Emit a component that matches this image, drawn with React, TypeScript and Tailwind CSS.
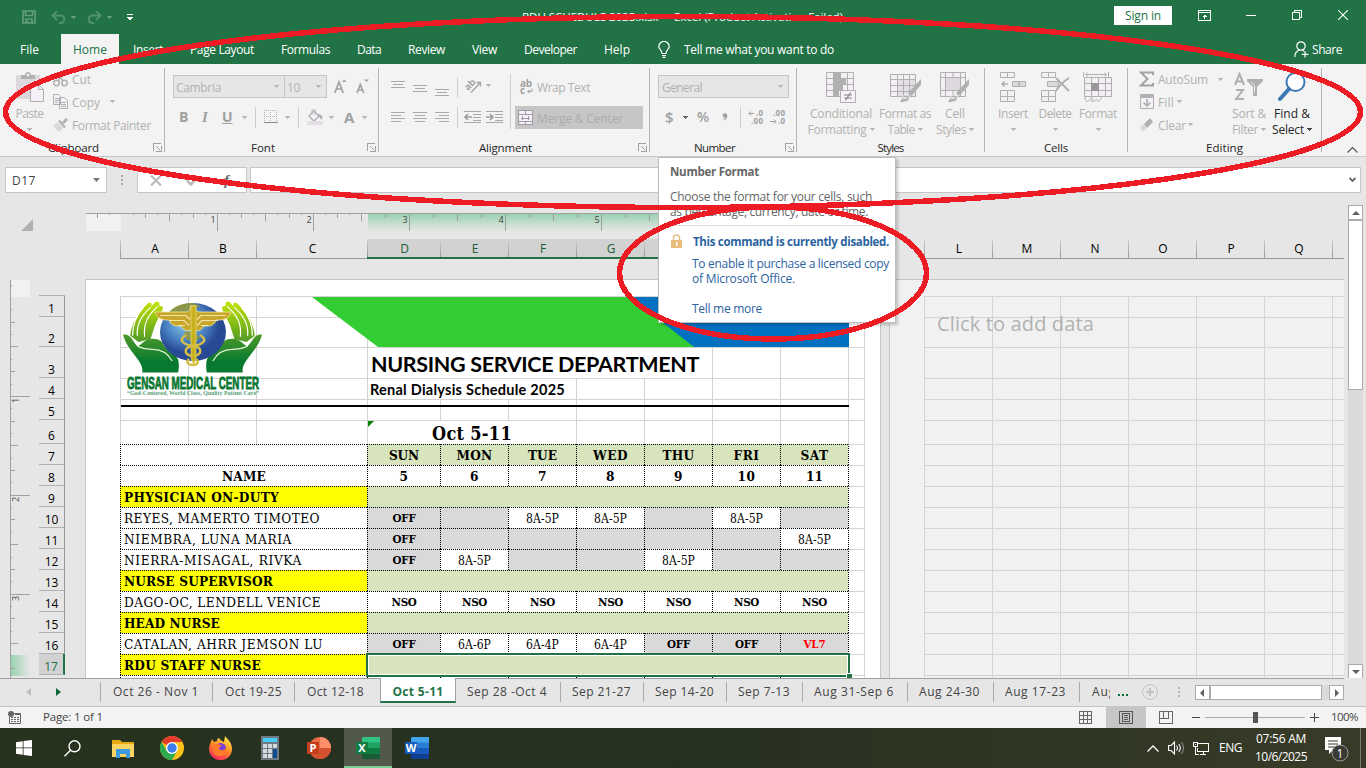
import React, { useLayoutEffect, useRef, useState } from "react";

const UI = "font-['Open_Sans','Noto_Sans',sans-serif]";
const SERIF = "font-['DejaVu_Serif_Condensed','DejaVu_Serif','Liberation_Serif',serif]";

/* One line of text whose letter spacing is computed so that it fills `w` pixels. */
function T({ w, children, className = "" }: { w: number; children: string; className?: string }) {
  const ref = useRef<HTMLSpanElement>(null);
  const [ls, setLs] = useState(0);
  useLayoutEffect(() => {
    const el = ref.current;
    if (!el) return;
    setLs((w - el.getBoundingClientRect().width) / children.length);
  }, []);
  return (
    <span ref={ref} className={`inline-block shrink-0 whitespace-pre ${className}`} style={{ letterSpacing: `${ls}px` }}>
      {children}
    </span>
  );
}

function Caret({ className = "text-[#b8b8b8]" }: { className?: string }) {
  return (
    <svg className={`shrink-0 ${className}`} width="5" height="3" viewBox="0 0 5 3" shapeRendering="crispEdges">
      <path d="M0 0h5v1h-1v1h-1v1h-1v-1h-1v-1h-1z" fill="currentColor" />
    </svg>
  );
}

function Sep({ className = "h-5" }: { className?: string }) {
  return <div className={`w-px shrink-0 bg-[#cfcfcf] ${className}`} />;
}

function Slot({ className = "", children }: { className?: string; children?: React.ReactNode }) {
  return <div className={`flex shrink-0 items-center ${className}`}>{children}</div>;
}

function Group({ className = "", label, w, launcher, children }: { className?: string; label: string; w: number; launcher?: boolean; children: React.ReactNode }) {
  return (
    <section className={`mt-1 flex h-[84px] shrink-0 flex-col border-r border-[#b4b4b4] ${className}`}>
      <div className="flex h-[74px]">{children}</div>
      <div className="flex h-[10px] items-center">
        <div className="flex flex-1 justify-center text-[11.5px] leading-[10px] text-[#262626]">
          <T w={w}>{label}</T>
        </div>
        {launcher && (
          <div className="w-[17px] pl-[6px] pt-px">
            <svg width="9" height="9" viewBox="0 0 9 9" fill="none" stroke="#a0a0a0" shapeRendering="crispEdges">
              <path d="M.5 8V.5H8M3 3l4 4M8.5 3v5.5H3" />
            </svg>
          </div>
        )}
      </div>
    </section>
  );
}

/* ---------- title bar and tabs ---------- */

function TitleBar() {
  return (
    <header className="flex h-[34px] shrink-0 items-center bg-[#217346] text-white">
      <svg className="ml-[22px]" width="14" height="14" viewBox="0 0 14 14" fill="none" stroke="#649d7e" strokeWidth="1.6">
        <path d="M1 1h12v12H1zM3.5 1v4.5h7V1M4 13V9h6v4M6 13v-2" />
      </svg>
      <svg className="ml-[15px]" width="15" height="13" viewBox="0 0 15 13" fill="none" stroke="#4f9170" strokeWidth="2">
        <path d="M6 0L1.5 4.5L6 9M2 4.5h7.5c5 0 5 7.5 0 7.5H8" />
      </svg>
      <Caret className="ml-[5px] text-[#649d7e]" />
      <svg className="ml-[11px]" width="15" height="13" viewBox="0 0 15 13" fill="none" stroke="#4f9170" strokeWidth="2">
        <path d="M9 0l4.5 4.5L9 9M13 4.5H5.5c-5 0-5 7.5 0 7.5H7" />
      </svg>
      <Caret className="ml-[5px] text-[#649d7e]" />
      <svg className="ml-[15px]" width="6" height="7" viewBox="0 0 6 7" fill="#fff" shapeRendering="crispEdges">
        <path d="M0 0h6v1H0zM0 3h6v1H5v1H4v1H2V5H1V4H0z" />
      </svg>
      <div className="ml-[389px] w-[592px] pb-px text-[11.5px] leading-none">
        <T w={321}>RDU SCHEDULE 2025.xlsx  -  Excel (Product Activation Failed)</T>
      </div>
      <div className="-mt-[3px] flex h-[19px] w-[58px] items-center justify-center bg-white text-[12px] leading-none text-[#217346]">
        <T w={36}>Sign in</T>
      </div>
      <svg className="-mt-1 ml-[26px]" width="13" height="11" viewBox="0 0 13 11" fill="none" stroke="#fff" shapeRendering="crispEdges">
        <path d="M.5 .5h12v10H.5zM.5 2.5h12M6.5 4.5v4M4.500 6.5h4M5.5 5.5h2" />
      </svg>
      <div className="-mt-1 ml-[35px] h-px w-[10px] bg-white" />
      <svg className="-mt-1 ml-[36px]" width="10" height="10" viewBox="0 0 10 10" fill="none" stroke="#fff" shapeRendering="crispEdges">
        <path d="M.5 2.5h7v7h-7zM2.5 2V.5h7v7H8" />
      </svg>
      <svg className="-mt-1 ml-[36px]" width="10" height="10" viewBox="0 0 10 10" fill="none" stroke="#fff" strokeWidth="1.1">
        <path d="M0 0l10 10M10 0L0 10" />
      </svg>
    </header>
  );
}

function TabBar() {
  const tabs: [string, number][] = [["Insert", 30], ["Page Layout", 64], ["Formulas", 49], ["Data", 24], ["Review", 37], ["View", 25], ["Developer", 53], ["Help", 26]];
  return (
    <nav className="flex h-[30px] shrink-0 items-center bg-[#217346] text-[12px] leading-none text-white [&_span]:pt-[1px]">
      <div className="ml-[20px] w-[41px]"><T w={19}>File</T></div>
      <div className="flex h-[30px] w-[58px] items-center justify-center bg-[#f3f3f3] text-[#217346]"><T w={34}>Home</T></div>
      <div className="ml-[14px] flex gap-[27px]">
        {tabs.map(([t, w]) => <T key={t} w={w}>{t}</T>)}
      </div>
      <svg className="ml-[28px]" width="12" height="17" viewBox="0 0 12 17" fill="none" stroke="#fff" strokeWidth="1.2">
        <path d="M4 12.5C4 9 .8 8.5 .8 5.5a5.2 5 0 0 1 10.4 0c0 3-3.2 3.5-3.2 7zM4 14.5h4M4.5 16.3h3" />
      </svg>
      <div className="ml-[14px] w-[610px]"><T w={150}>Tell me what you want to do</T></div>
      <svg width="15" height="17" viewBox="0 0 15 17" fill="none" stroke="#fff" strokeWidth="1.2">
        <circle cx="7" cy="5" r="4.2" />
        <path d="M.8 16c0-4 2-6 4.5-7M8.5 9.2l1.5 1M11 10v6.5M7.8 13.3h6.6" />
      </svg>
      <div className="ml-[3px]"><T w={30}>Share</T></div>
    </nav>
  );
}

/* ---------- ribbon ---------- */

const G = "#b0b0b0";

function BigButton({ className, icon, lines, dark }: { className: string; icon: React.ReactNode; lines: [string, number, boolean][]; dark?: boolean }) {
  return (
    <div className={`flex shrink-0 flex-col items-center text-[12px] ${dark ? "text-[#262626]" : "text-[#b1b1b1]"} ${className}`}>
      <div className="mt-1 h-[33px]">{icon}</div>
      {lines.map(([t, w, c], i) => (
        <div key={i} className="flex h-4 items-center gap-[3px] leading-4">
          {t && <T w={w}>{t}</T>}
          {c && <Caret className={dark ? "text-[#444]" : "text-[#b8b8b8]"} />}
        </div>
      ))}
    </div>
  );
}

function AlignIcon({ lines }: { lines: [number, number, number][] }) {
  return (
    <svg width="14" height="14" viewBox="0 0 14 14" fill="#a9a9a9" shapeRendering="crispEdges">
      {lines.map(([x, y, w], i) => <rect key={i} x={x} y={y} width={w} height="1" />)}
    </svg>
  );
}

function Grid5({ children }: { children?: React.ReactNode }) {
  return (
    <svg width="30" height="31" viewBox="0 0 30 31" fill="none" stroke={G}>
      <path d="M.5 .5h27v24H.5zM.5 6.5h27M.5 12.5h27M.5 18.5h27M7.5 .5v24M14.5 .5v24M21.5 .5v24" fill="#f3eff5" />
      {children}
    </svg>
  );
}

function Brush() {
  return (
    <g stroke="none">
      <path d="M29 7v6L19 24l-3-3z" fill={G} />
      <path d="M7 30c3-1 2-7 7-7 4 0 4 4 2 6-2 1-6 2-9 1z" fill={G} stroke="#f3f3f3" />
      <path d="M11 27c2-2 3-1 4-1" stroke="#eee" strokeWidth="1.5" fill="none" />
    </g>
  );
}

function Ribbon() {
  return (
    <div className="flex h-[93px] shrink-0 border-b border-[#c9c9c9] bg-[#f3f3f3] text-[12px] leading-none text-[#b1b1b1] [&_span]:pt-[2px]">
      <Group className="w-[165px]" label="Clipboard" w={51} launcher>
        <BigButton
          className="ml-[14px] w-[31px]"
          icon={
            <svg width="28" height="31" viewBox="0 0 28 31">
              <path d="M0 3h24v24H0z" fill="#dcd8de" />
              <path d="M5 7V3h4c0-4 6-4 6 0h4v4z" fill={G} />
              <circle cx="12" cy="3" r="1.5" fill="#f3f3f3" />
              <path d="M14.5 12.5h8l5 5v12h-13z" fill="#f6f1f8" stroke={G} />
              <path d="M22.5 12.5v5h5" fill="none" stroke={G} />
            </svg>
          }
          lines={[["Paste", 28, false], ["", 0, true]]}
        />
        <div className="ml-[8px] flex flex-col">
          <Slot className="h-[22px]">
            <svg width="15" height="15" viewBox="0 0 15 15" fill="none" stroke={G} strokeWidth="1.5">
              <path d="M4 0l6 9M11 0L5 9" /><circle cx="3.5" cy="11" r="2.7" /><circle cx="11.5" cy="11" r="2.7" />
            </svg>
            <T w={19} className="ml-1">Cut</T>
          </Slot>
          <Slot className="h-[23px]">
            <svg width="15" height="15" viewBox="0 0 15 15" fill="#f6f1f8" stroke={G}>
              <path d="M.5 .5h5l2 2v8h-7zM2 4.5h4M2 6.5h4M2 8.5h3M6.5 3.5h5l3 3v8h-8zM8 8.5h5M8 10.5h5M8 12.5h5" />
            </svg>
            <T w={28} className="ml-1">Copy</T>
            <Caret className="ml-[10px] text-[#b8b8b8]" />
          </Slot>
          <Slot className="h-[23px]">
            <svg width="15" height="14" viewBox="0 0 15 14">
              <path d="M0 8l5-4 5 6-4 4z" fill="#dcd8de" /><path d="M5 3l2-1 6 7-2 1zM9 4l4-4 2 2-4 4z" fill={G} />
            </svg>
            <T w={79} className="ml-1">Format Painter</T>
          </Slot>
        </div>
      </Group>

      <Group className="w-[214px]" label="Font" w={24} launcher>
        <div className="flex flex-col">
          <Slot className="mt-[7px] h-[23px]">
            <div className="ml-[8px] flex h-[23px] w-[112px] items-center border border-[#c6c6c6] bg-[#e6e6e6]">
              <T w={45} className="ml-[2px]">Cambria</T><Caret className="ml-[53px] text-[#b8b8b8]" />
            </div>
            <div className="-ml-px flex h-[23px] w-[43px] items-center border border-[#c6c6c6] bg-[#e6e6e6]">
              <T w={13} className="ml-[2px]">10</T><Caret className="ml-[16px] text-[#b8b8b8]" />
            </div>
            <svg className="ml-[7px]" width="36" height="16" viewBox="0 0 36 16" fill="none" stroke="#a2a2a2" strokeWidth="1.7">
              <path d="M.8 14L5 3l4.200 11M2.500 10h5.500M23 14l3.300-8.500L29.800 14M24.300 11h4.200" />
              <path d="M8 3l2.200-2.500L12.500 3zM30 .5h5L32.5 3z" fill="#a2a2a2" stroke="none" />
            </svg>
          </Slot>
          <Slot className="mt-[8px] h-[22px] text-[14px] text-[#a0a0a0]">
            <Slot className="ml-[14px] w-[9px] font-bold">B</Slot>
            <Slot className="ml-[14px] w-[8px] font-['Liberation_Serif'] text-[15px] font-bold italic">I</Slot>
            <Slot className="ml-[12px] w-[10px] font-bold underline">U</Slot>
            <Caret className="ml-[10px] text-[#b8b8b8]" />
            <Sep className="ml-[8px] h-[21px]" />
            <svg className="ml-[8px]" width="14" height="14" viewBox="0 0 14 14" fill="none" stroke="#b9b0bd" shapeRendering="crispEdges">
              <path d="M0 .5h13M0 6.5h13M.5 0v13M6.5 0v13M12.5 0v13" strokeDasharray="1 1" /><path d="M0 12.5h14" stroke="#888" />
            </svg>
            <Caret className="ml-[7px] text-[#b8b8b8]" />
            <Sep className="ml-[8px] h-[21px]" />
            <svg className="ml-[8px]" width="17" height="16" viewBox="0 0 17 16">
              <path d="M2 7l5-5 5 5-5 5z" fill="#f6f1f8" stroke={G} strokeWidth="1.3" /><path d="M5 5V1.500c0-2 3-2 3 0V6" fill="none" stroke={G} />
              <path d="M11 5c4 0 5 3 4 6-2-1-2-3-4-4z" fill={G} /><path d="M0 12h16v4H0z" fill="#e4dde6" />
            </svg>
            <Caret className="ml-[5px] text-[#b8b8b8]" />
            <Slot className="ml-[10px] w-[10px] text-[15px] font-bold">A</Slot>
            <Caret className="ml-[8px] text-[#b8b8b8]" />
          </Slot>
        </div>
      </Group>

      <Group className="w-[271px]" label="Alignment" w={53} launcher>
        <div className="ml-[12px] flex w-[119px] flex-col">
          <Slot className="mt-[4px] h-[26px] gap-2">
            <AlignIcon lines={[[0, 3, 14], [2, 6, 10], [0, 9, 14]]} />
            <AlignIcon lines={[[0, 7, 14], [2, 10, 10], [0, 13, 14]]} />
            <svg className="overflow-visible" width="14" height="14" viewBox="0 0 14 14" fill="#a9a9a9" shapeRendering="crispEdges"><path d="M0 12h14v1H0zM2 15h10v1H2zM0 18h14v1H0z" transform="translate(0 -1)" /></svg>
            <Sep className="mt-1 h-[21px]" />
            <svg className="-ml-px overflow-visible" width="17" height="16" viewBox="0 0 17 16" fill="none" stroke="#a4a4a4" strokeWidth="1.3">
              <path d="M6 15.5l9.500-10M11.500 5.500h4v4" />
              <text x="0" y="11" transform="rotate(-45 5 9)" fontSize="9.500" fontWeight="bold" fill="#a4a4a4" stroke="none">ab</text>
            </svg>
            <Caret className="-ml-[4px] text-[#b8b8b8]" />
          </Slot>
          <Slot className="mt-[7px] h-[24px] gap-2">
            <AlignIcon lines={[[0, 2, 14], [0, 5, 10], [0, 8, 14], [0, 11, 10]]} />
            <AlignIcon lines={[[0, 2, 14], [2, 5, 10], [0, 8, 14], [2, 11, 10]]} />
            <AlignIcon lines={[[0, 2, 14], [4, 5, 10], [0, 8, 14], [4, 11, 10]]} />
            <Sep className="h-[21px]" />
            <svg className="-ml-[2px] shrink-0" width="39" height="14" viewBox="0 0 39 14" fill="none" stroke="#a0a0a0">
              <path d="M0 1.500h17M9 4.500h8M9 7.500h8M9 10.500h8M0 12.500h17M22 1.500h17M31 4.500h8M31 7.500h8M31 10.500h8M22 12.500h17" shapeRendering="crispEdges" strokeWidth=".9" />
              <path d="M8 7H1.500M4 4.200L1 7l3 2.800M22 7h6M26 4.200L29 7l-3 2.800" strokeWidth="1.7" />
            </svg>
          </Slot>
        </div>
        <Sep className="mt-[6px] h-[55px]" />
        <div className="ml-[4px] flex w-[128px] flex-col">
          <Slot className="mt-[7px] h-[24px]">
            <svg className="ml-[5px] overflow-visible" width="13" height="16" viewBox="0 0 13 16" fill="#a0a0a0">
              <text x="0" y="7.500" fontSize="10" fontWeight="bold" textLength="12">ab</text><text x="0" y="15" fontSize="10" fontWeight="bold">c</text>
              <path d="M8 12.500h4V9.500M9.500 11l-2 1.500 2 1.500" fill="none" stroke="#a0a0a0" />
            </svg>
            <T w={53} className="ml-[4px]">Wrap Text</T>
          </Slot>
          <Slot className="mt-[7px] h-[23px] bg-[#c6c6c6]">
            <svg className="ml-[3px]" width="15" height="15" viewBox="0 0 15 15" fill="#f6f1f8" stroke="#a29ba5" shapeRendering="crispEdges">
              <path d="M.5 .5h14v14H.5zM.5 4.5h14M.5 11.5h14M7.5 .5v4M7.5 11.5v3M3 8h9M4.500 6v4M10.500 6v4" />
            </svg>
            <T w={86} className="ml-[4px] text-[#acacac]">Merge &amp; Center</T>
          </Slot>
        </div>
      </Group>

      <Group className="w-[147px]" label="Number" w={41} launcher>
        <div className="flex flex-col">
          <div className="ml-[8px] mt-[7px] flex h-[23px] w-[131px] items-center border border-[#c6c6c6] bg-[#e6e6e6]">
            <T w={40} className="ml-[3px]">General</T><Caret className="ml-[76px] text-[#b8b8b8]" />
          </div>
          <Slot className="mt-[8px] h-[22px] text-[15px] text-[#a0a0a0]">
            <Slot className="ml-[15px] w-[9px] font-semibold">$</Slot>
            <Caret className="ml-[9px] text-[#666]" />
            <Slot className="ml-[9px] w-[13px] text-[14px] font-semibold">%</Slot>
            <Slot className="ml-[12px] w-[7px]">
              <svg width="6" height="8" viewBox="0 0 6 8"><circle cx="3" cy="2.500" r="2.300" fill="#a0a0a0" /><path d="M5.300 2.500c0 2.500-1.300 4-3.300 5L1.500 6.500C3 6 3.500 5 3 4z" fill="#a0a0a0" /></svg>
            </Slot>
            <Sep className="ml-[11px] h-[21px]" />
            <svg className="ml-[7px]" width="38" height="15" viewBox="0 0 38 15" fill="#a0a0a0" fontSize="8" fontWeight="bold">
              <text x="8" y="6" textLength="7">.0</text><text x="3" y="14" textLength="12">.00</text>
              <text x="25" y="6" textLength="12">.00</text><text x="30" y="14" textLength="7">.0</text>
              <path d="M6 3.500H1M3 1.500l-2 2 2 2M22 11.500h6M26 9.500l2 2-2 2" fill="none" stroke="#a0a0a0" />
            </svg>
          </Slot>
        </div>
      </Group>

      <Group className="w-[188px]" label="Styles" w={26}>
        <BigButton className="ml-[9px] w-[70px]" lines={[["Conditional", 62, false], ["Formatting", 59, true]]} icon={
          <Grid5><path d="M8 1h6v5H8zM8 7h12v5H8zM8 13h9v5H8zM8 19h5v5H8z" fill={G} stroke="none" /><path d="M14.500 18.500h15v12h-15z" fill="#f6f1f8" /><path d="M18 23h8M18 26h8M24.500 20.500l-5 8" stroke="#888" strokeWidth="1.200" /></Grid5>
        } />
        <BigButton className="w-[58px]" lines={[["Format as", 52, false], ["Table", 27, true]]} icon={
          <svg width="26" height="31" viewBox="0 0 26 31" className="overflow-visible" fill="none" stroke={G}>
            <g transform="translate(-2 2)"><path d="M.5 .5h25v22H.5zM.5 5.500h25M.5 11.500h25M.5 17.500h25M7.5 .5v22M13.500 .5v22M19.500 .5v22" fill="#f3eff5" /><path d="M8 6h17v16H8z" fill="#e0dbe2" fillOpacity=".8" stroke="none" /><path d="M7.500 11.500h18M13.500 6v16M19.500 6v16M7.500 17.500h18" /></g>
            <Brush />
          </svg>
        } />
        <BigButton className="w-[42px]" lines={[["Cell", 20, false], ["Styles", 30, true]]} icon={
          <svg width="30" height="31" viewBox="0 0 30 31" fill="none" stroke={G}>
            <path d="M.5 .5h25v24H.5zM.5 5.500h25M.5 18.500h25M5.500 .5v24M20.500 .5v24M13 .5v5M13 18.500v6" fill="#f3eff5" />
            <path d="M5.500 5.500h15v13h-15z" fill="#dcd8de" /><Brush />
          </svg>
        } />
      </Group>

      <Group className="w-[143px]" label="Cells" w={24}>
        <BigButton className="ml-[8px] w-[40px]" lines={[["Insert", 30, false], ["", 0, true]]} icon={
          <svg width="28" height="31" viewBox="0 0 28 31" fill="#f3eff5" stroke={G}><path d="M1.500 .5h14v5h-14zM8.500 .5v5M1.500 18.500h14v11h-14zM8.500 18.500v11M1.500 24.500h14" /><path d="M13.500 9.500h13v5h-13z" fill="#dcd8de" /><path d="M20 9.500v5M9 12H3M5.500 9.500L3 12l2.500 2.500" strokeWidth="1.500" fill="none" /></svg>
        } />
        <BigButton className="w-[44px]" lines={[["Delete", 33, false], ["", 0, true]]} icon={
          <svg width="30" height="31" viewBox="0 0 30 31" fill="#f3eff5" stroke={G}><path d="M1.500 .5h14v5h-14zM8.500 .5v5M1.500 18.500h14v11h-14zM8.500 18.500v11M1.500 24.500h14" /><path d="M7.500 9.500h11v5h-11z" fill="#dcd8de" /><path d="M16 6l13 13M29 6C24 9 19 14 16 19" strokeWidth="2" fill="none" /></svg>
        } />
        <BigButton className="w-[42px]" lines={[["Format", 38, false], ["", 0, true]]} icon={
          <svg width="30" height="31" viewBox="0 0 30 31" fill="#f3eff5" stroke={G}><path d="M1.500 5.500h27v19h-27zM1.500 11.500h27M1.500 18.500h27M8.500 5.500v19M15.500 5.500v19M22.500 5.500v19" /><path d="M8 11h8v8H8z" fill="#999" stroke="none" /><path d="M2 2.500h22M4.500 .5l-2 2 2 2M21.500 .5l2 2-2 2M.5 0v5M25.500 0v5M2 24.500c0 8 4 5 7 1v4c5-1 5-4 6 0 3-1 3-3 3-5" fill="none" /></svg>
        } />
      </Group>

      <Group className="w-[194px]" label="Editing" w={37}>
        <div className="ml-[11px] flex w-[87px] flex-col">
          <Slot className="h-[22px]">
            <svg width="15" height="16" viewBox="0 0 15 16" fill="none" stroke="#a2a2a2" strokeWidth="2"><path d="M14 4V1.500H2L8.500 8 2 14.500h12V12" /></svg>
            <T w={50} className="ml-1">AutoSum</T><Caret className="ml-[10px] text-[#b8b8b8]" />
          </Slot>
          <Slot className="h-[23px]">
            <svg className="ml-[1px]" width="14" height="15" viewBox="0 0 14 15" fill="#f6f1f8" stroke={G}><path d="M.5 .5h13v14H.5z" /><path d="M1 1h12v3H1z" fill={G} stroke="none" /><path d="M7 5v7M3.500 8.500L7 12l3.500-3.500" strokeWidth="1.700" fill="none" /></svg>
            <T w={16} className="ml-1">Fill</T><Caret className="ml-[3px] text-[#b8b8b8]" />
          </Slot>
          <Slot className="h-[23px]">
            <svg className="ml-[1px]" width="14" height="13" viewBox="0 0 14 13"><path d="M4 6l6-6 3 4-6 6z" fill={G} /><path d="M0 9l3.500-3L7 10l-3 3-3-1z" fill="#dcd8de" /></svg>
            <T w={28} className="ml-1">Clear</T><Caret className="ml-[2px] text-[#b8b8b8]" />
          </Slot>
        </div>
        <BigButton className="ml-[4px] w-[38px]" lines={[["Sort &", 34, false], ["Filter", 26, true]]} icon={
          <svg width="30" height="31" viewBox="0 0 30 31" fill="none" stroke={G} strokeWidth="2"><path d="M1 13L5.500 2 10 13M3 9.500h5M2 18h7L2 27h8" /><path d="M13 7h16v2l-6 6v9h-4v-9l-6-6z" fill={G} stroke="none" /><path d="M17 9.500l3.500 4v7" stroke="#eee" strokeWidth="1" /></svg>
        } />
        <BigButton className="ml-[4px] w-[40px]" dark lines={[["Find &", 36, false], ["Select", 32, true]]} icon={
          <svg width="28" height="31" viewBox="0 0 28 31" fill="#fff" stroke="#3c79b4"><circle cx="17.500" cy="10" r="9" strokeWidth="2" /><path d="M11 17L2 27" strokeWidth="4" strokeLinecap="round" /></svg>
        } />
      </Group>
      <svg className="ml-[25px] mt-[83px]" width="11" height="6" viewBox="0 0 11 6" fill="none" stroke="#555" strokeWidth="1.200"><path d="M.5 5.500l5-5 5 5" /></svg>
    </div>
  );
}

function FormulaBar() {
  return (
    <div className="flex h-[42px] shrink-0 bg-[#e6e6e6] pt-[10px]">
      <div className="ml-[5px] flex h-[26px] w-[102px] items-center border border-[#c6c6c6] bg-white text-[12px] leading-none text-[#444]">
        <T w={24} className="ml-[6px] pt-[2px]">D17</T>
        <svg className="ml-[57px]" width="7" height="4" viewBox="0 0 7 4"><path d="M0 0h7L3.500 4z" fill="#777" /></svg>
      </div>
      <div className="ml-[14px] mt-[8px] flex h-[10px] w-[2px] flex-col justify-between"><i className="h-[2px] bg-[#aaa]" /><i className="h-[2px] bg-[#aaa]" /><i className="h-[2px] bg-[#aaa]" /></div>
      <div className="ml-[14px] flex h-[26px] w-[110px] items-center border border-[#c6c6c6] bg-white">
        <svg className="ml-[12px]" width="12" height="11" viewBox="0 0 12 11" stroke="#bcbcbc" strokeWidth="2.200"><path d="M1 .5l10 10M11 .5l-10 10" /></svg>
        <svg className="ml-[24px]" width="13" height="11" viewBox="0 0 13 11" stroke="#bcbcbc" strokeWidth="2.600" fill="none"><path d="M1 5.500l4 4L12 1" /></svg>
        <div className="ml-[25px] font-['Liberation_Serif',serif] text-[15px] font-bold italic leading-none text-[#666]">f<span className="text-[10px]">x</span></div>
      </div>
      <div className="ml-[3px] flex h-[26px] w-[1111px] items-center justify-end border border-[#c6c6c6] bg-white">
        <svg className="mr-1" width="7" height="6" viewBox="0 0 7 6" fill="none" stroke="#666" strokeWidth="1.800"><path d="M.5 1l3 3 3-3" /></svg>
      </div>
    </div>
  );
}

/* ---------- work sheet ---------- */

function HRuler() {
  const ticks = [];
  for (let i = -2; i < 62; i++) ticks.push(i);
  return (
    <div className="ml-[86px] flex h-[18px] w-[778px] border-t border-[#a0a0a0]">
      <div className="h-[17px] w-[35px] bg-[#f1f1f1]" />
      <div className="h-[17px] w-[247px]" />
      <div className="h-[17px] w-[480px] bg-linear-to-b from-[#99d2b1] to-[#e6e6e6]" />
      <svg className="absolute" width="778" height="18" viewBox="0 0 778 18" fill="#a0a0a0" shapeRendering="crispEdges">
        {ticks.map((i) => (
          <rect key={i} x={35 + i * 12} y="0" width="1" height={i > 0 && i % 8 === 0 ? 17 : i % 4 === 0 ? (i ? 7 : 0) : i % 2 === 0 ? 4 : 1} />
        ))}
        {[1, 2, 3, 4, 5].map((n) => <text key={n} x={28.500 + n * 96} y="9" fontSize="9" fill="#444">{n}</text>)}
      </svg>
    </div>
  );
}

function VRuler() {
  const ticks = [];
  for (let i = 1; i < 31; i++) ticks.push(i);
  return (
    <div className="ml-[10px] w-[29px] shrink-0">
      <svg width="21" height="399" viewBox="0 0 21 399" fill="#a0a0a0" shapeRendering="crispEdges">
        <defs><linearGradient id="vr"><stop offset="0" stopColor="#99d2b1" /><stop offset="1" stopColor="#e6e6e6" /></linearGradient></defs>
        <rect x="1" y="1" width="19" height="17" fill="#f1f1f1" />
        <rect x="1" y="376" width="19" height="21" fill="url(#vr)" />
        <rect x="0" y="1" width="1" height="398" />
        <rect x="1" y="6" width="1" height="1" />
        {ticks.map((i) => (
          <rect key={i} x="1" y={Math.round(18 + i * 12.360)} height="1" width={i % 8 === 0 ? 19 : i % 4 === 0 ? 7 : i % 2 === 0 ? 4 : 1} />
        ))}
        {[1, 2, 3].map((n) => <text key={n} transform={`translate(8.500 ${25 + n * 99}) rotate(-90)`} fontSize="9" fill="#444">{n}</text>)}
      </svg>
    </div>
  );
}

function ColHead({ cols, last }: { cols: [string, string, boolean][]; last?: boolean }) {
  return (
    <div className="flex h-[20px] text-[12px] leading-none">
      {cols.map(([l, w, sel], i) => (
        <div key={i} className={`flex shrink-0 items-center overflow-hidden border-b ${w} ${sel ? "border-b-2 border-[#217346] bg-[#d2d2d2] text-[#1d5c3a]" : "border-[#999] text-black"}`}>
          <div className="h-full w-px shrink-0 bg-linear-to-b from-[#d0d0d0] to-[#999]" />
          <div className={`flex-1 pl-px text-center ${sel ? "pt-[3px]" : "pt-[2px]"}`}>{l}</div>
        </div>
      ))}
      {last && <div className="w-px bg-[#999]" />}
    </div>
  );
}

const ROWS = "grid-rows-[21px_30px_31px_21px_21px_24px_21px_21px_21px_21px_21px_21px_21px_21px_21px_21px_21px_21px]";

type C = { s?: number; t?: string; w?: number; bg?: string; k?: string; tx?: string };

const off: C = { t: "OFF", w: 23, bg: "bg-[#d9d9d9]", tx: "text-[11.5px] font-bold" };
const gray: C = { bg: "bg-[#d9d9d9]" };
const shift = (t: string): C => ({ t, w: 33, tx: "text-[12px]" });
const nso: C = { t: "NSO", w: 25, tx: "text-[11.5px] font-bold" };
const band: C = { s: 7, bg: "bg-[#d8e4bc]" };
const person = (t: string, w: number): C => ({ s: 3, t, w, k: "left", tx: "text-[13.5px]" });
const section = (t: string, w: number): C => ({ s: 3, t, w, k: "left", bg: "bg-[#ffff00]", tx: "text-[13.5px] font-bold" });
const head = (t: string, w: number, bg = "bg-[#d8e4bc]"): C => ({ t, w, bg, tx: "text-[13.5px] font-bold" });

const schedule: C[][] = [
  [{ s: 3 }, head("SUN", 30), head("MON", 36), head("TUE", 29), head("WED", 35), head("THU", 32), head("FRI", 26), head("SAT", 28)],
  [{ s: 3, t: "NAME", w: 44, tx: "text-[13.5px] font-bold" }, head("5", 9, ""), head("6", 9, ""), head("7", 9, ""), head("8", 9, ""), head("9", 9, ""), head("10", 18, ""), head("11", 17, "")],
  [section("PHYSICIAN ON-DUTY", 155), band],
  [person("REYES, MAMERTO TIMOTEO", 196), off, gray, shift("8A-5P"), shift("8A-5P"), gray, shift("8A-5P"), gray],
  [person("NIEMBRA, LUNA MARIA", 168), off, gray, gray, gray, gray, gray, shift("8A-5P")],
  [person("NIERRA-MISAGAL, RIVKA", 178), off, shift("8A-5P"), gray, gray, shift("8A-5P"), gray, gray],
  [section("NURSE SUPERVISOR", 149), band],
  [person("DAGO-OC, LENDELL VENICE", 197), nso, nso, nso, nso, nso, nso, nso],
  [section("HEAD NURSE", 96), band],
  [person("CATALAN, AHRR JEMSON LU", 199), off, shift("6A-6P"), shift("6A-4P"), shift("6A-4P"), off, off, { t: "VL7", w: 22, bg: "bg-[#d9d9d9]", tx: "text-[11.5px] font-bold text-[#ff0000]" }],
  [section("RDU STAFF NURSE", 137), band],
  [{ s: 3 }, {}, {}, {}, {}, {}, {}, {}],
];

function Blank({ n }: { n: number }) {
  return <>{Array.from({ length: n }, (_, i) => <div key={i} className="border-l border-t border-[#d4d4d4]" />)}</>;
}

function Logo() {
  const hand = (
    <g transform="scale(1.2 1.05)">
      <path d="M6 34C7 22 13 12 20 4c3-3 5-1 3 3l4-5c3-2 4 1 3 4 2-1 4 0 3 3L27 23c-2 7-3 10-4 14L13 40z" fill="url(#lf)" />
      <path d="M23 7C15 15 11 24 12 34M29 6c-9 9-12 17-11 29M17 7C10 16 8 24 8 34" fill="none" stroke="#fff" strokeWidth="1" />
      <path d="M0 33c7-1 8 7 12 11 3 0 5-6 11-7 6 0 9 1 11 6 2 4 4 5 9 9 4 4 4 10 3 17H16C18 58 4 50 0 33z" fill="url(#lp)" />
      <path d="M12 44c6 3 9 3 13 3 8 0 13 5 16 11" fill="none" stroke="#dff0cf" strokeWidth="1" />
    </g>
  );
  return (
    <svg className="absolute left-[37px] top-[20px]" width="140" height="98" viewBox="0 0 140 98">
      <defs>
        <linearGradient id="lf" x1="0" y1="0" x2="0" y2="1"><stop offset="0" stopColor="#c4e400" /><stop offset="1" stopColor="#4f9a28" /></linearGradient>
        <linearGradient id="lp" x1="0" y1="0" x2="0" y2="1"><stop offset="0" stopColor="#4f9a28" /><stop offset=".7" stopColor="#087a30" /></linearGradient>
        <radialGradient id="lg" cx=".4" cy=".35"><stop offset="0" stopColor="#8fd0ee" /><stop offset=".6" stopColor="#4a83c4" /><stop offset="1" stopColor="#284a94" /></radialGradient>
      </defs>
      {hand}
      <g transform="matrix(-1 0 0 1 139 0)">{hand}</g>
      <ellipse cx="70" cy="32" rx="33" ry="29" fill="url(#lg)" />
      <path d="M47 11c6-6 14-8 23-8l8 3-12 4-8 4-9 3zM61 32c6-2 12 2 16 5l-5 6-9-4zM87 14l8 6-4 4-6-4z" fill="#9a9a2a" opacity=".8" />
      <g transform="translate(1 1)">
        <path d="M31 11h31c4 0 5-5 4-6h6c-1 3 0 6 4 6h31c-2 6-6 8-12 8h-3c-2 5-5 6-9 6h-3c-3 5-6 5-11 4H68c-5 1-8 1-11-4h-3c-4 0-7-1-9-6h-2c-6 0-10-2-12-8z" fill="#c8a62a" stroke="#f6e9a0" strokeWidth=".8" />
        <path d="M36 14.500h26l4 4M45 19.500h15l5 5M54 24.500h7M102 14.500H77l-4 4M94 19.500H78l-5 5M84 24.500h-7" stroke="#f2e6a6" strokeWidth="1.200" fill="none" />
        <path d="M67 5h5v52l-2.500 7-2.500-7z" fill="#c9b11e" stroke="#f3e68c" strokeWidth=".6" />
        <path d="M62 34c-9 5-2 10 7 11s10 8 1 10M76 34c9 5 2 10-7 11s-10 8-1 10M65 58c-3 3-1 6 4 6s6-4 3-6" fill="none" stroke="#d6bd45" strokeWidth="2.500" />
      </g>
      <text x="4" y="89" fontFamily="Liberation Sans Narrow, Liberation Sans" fontSize="17" fontWeight="bold" textLength="132" lengthAdjust="spacingAndGlyphs" fill="#06752f" stroke="#06752f" strokeWidth=".8">GENSAN MEDICAL CENTER</text>
      <text x="4" y="95" fontFamily="Liberation Serif" fontSize="6" fontWeight="bold" textLength="132" lengthAdjust="spacingAndGlyphs" fill="#57a077">“God-Centered, World Class, Quality Patient Care”</text>
    </svg>
  );
}

function PageOne() {
  return (
    <div className="relative flex h-[399px] w-[796px] shrink-0 overflow-hidden border-x border-t border-[#c6c6c6] bg-white pl-[34px] pt-[16px]">
      <div className={`grid h-max grid-cols-[68px_68px_111px_73px_68px_68px_68px_68px_68px_68px_16px] border-r border-[#d4d4d4] ${ROWS}`}>
        <Blank n={22} />
        <Blank n={3} />
        <div className="col-span-5 flex items-center border-l border-t border-[#d4d4d4] pl-[3px] pt-[3px] font-['Lato',sans-serif] text-[21.5px] font-bold leading-none text-black">
          <T w={328}>NURSING SERVICE DEPARTMENT</T>
        </div>
        <Blank n={3} />
        <Blank n={3} />
        <div className="col-span-3 flex items-center border-l border-t border-[#d4d4d4] pl-[2px] pt-[2px] font-['Lato',sans-serif] text-[14.5px] font-bold leading-none text-black">
          <T w={195}>Renal Dialysis Schedule 2025</T>
        </div>
        <Blank n={5} />
        <Blank n={11} />
        <Blank n={3} />
        <div className={`relative col-span-3 flex items-center justify-center border-l border-t border-[#d4d4d4] pt-[3px] text-[18px] font-bold leading-none text-black ${SERIF}`}>
          <svg className="absolute left-0 top-0" width="6" height="6" viewBox="0 0 6 6"><path d="M0 0h6L0 6z" fill="#008000" /></svg>
          <T w={80}>Oct 5-11</T>
        </div>
        <Blank n={5} />
        {schedule.map((row, r) => (
          <React.Fragment key={r}>
            {row.map((c, i) => (
              <div
                key={i}
                className={`flex items-center border-l border-t border-dotted border-black text-[12.5px] leading-none text-black ${SERIF} ${c.s === 3 ? "col-span-3" : c.s === 7 ? "col-span-7" : ""} ${c.k === "left" ? "pl-[3px] pt-[2px]" : "justify-center pt-[2px]"} ${c.bg || ""}`}
              >
                {c.t && <T w={c.w || 20} className={c.tx || ""}>{c.t}</T>}
              </div>
            ))}
            <div className={`border-t border-l border-t-[#d4d4d4] ${r < 11 ? "border-l-black [border-left-style:dotted]" : "border-l-[#d4d4d4]"}`} />
          </React.Fragment>
        ))}
      </div>
      <Logo />
      <svg className="absolute left-[226px] top-[17px]" width="537" height="51" viewBox="0 0 537 51">
        <path d="M300 0h237v50H300z" fill="#0070c0" />
        <path d="M0 0h318l64 50H66z" fill="#33cc33" />
      </svg>
      <div className="absolute left-[35px] top-[125px] h-[2px] w-[728px] bg-black" />
      <div className="absolute left-[280px] top-[373px] h-[24px] w-[484px] border-2 border-[#217346]"><div className="h-full border border-white" /></div>
      <div className="absolute left-[760px] top-[393px] h-[6px] w-[6px] border-l border-t border-white bg-[#217346]" />
    </div>
  );
}

function PageTwo() {
  return (
    <div className="relative h-[399px] w-[455px] shrink-0 overflow-hidden border-l border-t border-[#c6c6c6] bg-[#f1f1f1] pl-[34px] pt-[16px]">
      <div className={`grid grid-cols-[68px_68px_68px_68px_68px_68px_68px] ${ROWS}`}>
        <Blank n={126} />
      </div>
      <div className="absolute left-[47px] top-[34px] text-[20px] leading-none text-[#b1b1b1]"><T w={157}>Click to add data</T></div>
    </div>
  );
}

function ArrowButton({ d, className }: { d: string; className: string }) {
  return (
    <div className={`flex shrink-0 items-center justify-center border border-[#ababab] bg-white ${className}`}>
      <svg width="8" height="8" viewBox="0 0 8 8"><path d={d} fill="#606060" /></svg>
    </div>
  );
}

function Sheet() {
  const heights = ["h-[21px]", "h-[30px]", "h-[31px]", "h-[21px]", "h-[21px]", "h-[24px]"];
  return (
    <main className="flex h-[479px] shrink-0 overflow-hidden bg-[#e6e6e6]">
      <div className="flex w-[1344px] shrink-0 flex-col">
        <div className="flex h-[40px] pt-[14px]">
          <div className="relative"><HRuler /></div>
        </div>
        <div className="flex h-[20px]">
          <svg className="-mt-[20px] ml-[21px]" width="12" height="12" viewBox="0 0 12 12"><path d="M12 0v12H0z" fill="#b1b1b1" /></svg>
          <div className="ml-[87px]">
            <ColHead last cols={[["A", "w-[68px]", false], ["B", "w-[68px]", false], ["C", "w-[111px]", false], ["D", "w-[73px]", true], ["E", "w-[68px]", true], ["F", "w-[68px]", true], ["G", "w-[68px]", true], ["", "w-[68px]", true], ["", "w-[68px]", true], ["", "w-[68px]", true], ["", "w-[16px]", false]]} />
          </div>
          <div className="ml-[59px] w-[420px] overflow-hidden">
            <ColHead cols={[["L", "w-[68px]", false], ["M", "w-[68px]", false], ["N", "w-[68px]", false], ["O", "w-[68px]", false], ["P", "w-[68px]", false], ["Q", "w-[68px]", false], ["", "w-[68px]", false]]} />
          </div>
        </div>
        <div className="mt-[20px] flex h-[400px]">
          <VRuler />
          <div className="w-[26px] shrink-0 pt-[17px] text-[12px] leading-none">
            <div className="-mt-px h-px bg-[#b0b0b0]" />
            {Array.from({ length: 17 }, (_, i) => (
              <div key={i} className={`flex items-end justify-center border-b border-r border-b-[#b0b0b0] pb-[1px] ${heights[i] || "h-[21px]"} ${i === 16 ? "border-r-2 border-r-[#217346] bg-[#d2d2d2] text-[#217346]" : "border-r-[#999] text-black"}`}>
                {i + 1}
              </div>
            ))}
          </div>
          <div className="w-[20px] shrink-0" />
          <PageOne />
          <div className="w-[8px] shrink-0" />
          <PageTwo />
        </div>
      </div>
      <div className="ml-1 mt-[6px] flex h-[474px] w-[15px] flex-col bg-[#dadada]">
        <ArrowButton className="h-[15px]" d="M0 6h8L4 2z" />
        <div className="h-[170px] border border-[#ababab] bg-white" />
        <div className="flex-1" />
        <ArrowButton className="h-[15px]" d="M0 2h8L4 6z" />
      </div>
    </main>
  );
}

function SheetTabs() {
  const before: [string, number, string][] = [["Oct 26 - Nov 1", 86, "w-[112px]"], ["Oct 19-25", 57, "w-[82px]"], ["Oct 12-18", 57, "w-[86px]"]];
  const after: [string, number, string][] = [["Sep 28 -Oct 4", 80, "w-[105px]"], ["Sep 21-27", 59, "w-[83px]"], ["Sep 14-20", 59, "w-[83px]"], ["Sep 7-13", 52, "w-[76px]"], ["Aug 31-Sep 6", 80, "w-[105px]"], ["Aug 24-30", 61, "w-[86px]"], ["Aug 17-23", 61, "w-[86px]"]];
  return (
    <div className="flex h-[28px] shrink-0 bg-[#e6e6e6] text-[12px] leading-none text-[#444]">
      <div className="flex h-[28px] w-[1133px] shrink-0 border-t border-[#a0a0a0]">
        <svg className="ml-[26px] mt-[9px]" width="5" height="8" viewBox="0 0 5 8"><path d="M5 0v8L0 4z" fill="#bdbdbd" /></svg>
        <svg className="ml-[25px] mt-[9px]" width="5" height="8" viewBox="0 0 5 8"><path d="M0 0v8l5-4z" fill="#0d6b3a" /></svg>
        <div className="ml-[39px] flex">
          {before.map(([t, w, c]) => (
            <div key={t} className={`mt-[3px] flex h-[20px] items-center border-l border-[#ababab] pl-[12px] ${c}`}><T w={w}>{t}</T></div>
          ))}
        </div>
        <div className="-mt-px flex h-[25px] w-[76px] items-center justify-center border-x border-b-2 border-x-[#a0a0a0] border-b-[#217346] bg-white pt-[4px] font-bold text-[#217346]"><T w={51}>Oct 5-11</T></div>
        <div className="flex">
          {after.map(([t, w, c]) => (
            <div key={t} className={`mt-[3px] flex h-[20px] items-center border-r border-[#ababab] pl-[11px] ${c}`}><T w={w}>{t}</T></div>
          ))}
        </div>
        <div className="mt-[3px] flex h-[20px] w-[30px] items-center overflow-hidden pl-[12px]"><T w={24}>Aug</T></div>
        <div className="ml-[8px] mt-[15px] flex gap-[2px]"><i className="size-[2px] bg-[#0d6b3a]" /><i className="size-[2px] bg-[#0d6b3a]" /><i className="size-[2px] bg-[#0d6b3a]" /></div>
      </div>
      <div className="flex w-[211px] border-t border-[#a0a0a0]">
        <svg className="ml-[9px] mt-[5px]" width="16" height="16" viewBox="0 0 16 16" fill="none" stroke="#c3c3c3"><circle cx="8" cy="8" r="7.500" /><path d="M8 4v8M4 8h8" strokeWidth="2" /></svg>
        <div className="ml-[20px] mt-[8px] flex h-[10px] w-[2px] flex-col justify-between"><i className="h-[2px] bg-[#b5b5b5]" /><i className="h-[2px] bg-[#b5b5b5]" /><i className="h-[2px] bg-[#b5b5b5]" /></div>
        <div className="ml-[15px] mt-[6px] flex h-[15px] w-[150px] bg-[#dadada]">
          <ArrowButton className="w-[15px]" d="M6 0v8L2 4z" />
          <div className="w-[112px] border border-[#ababab] bg-white" />
          <div className="flex-1" />
          <ArrowButton className="w-[15px]" d="M2 0v8l4-4z" />
        </div>
      </div>
    </div>
  );
}

function StatusBar() {
  return (
    <div className="flex h-[22px] shrink-0 items-center border-t border-[#c6c6c6] bg-[#f3f3f3] text-[11.5px] leading-none text-[#444]">
      <svg className="ml-[8px]" width="13" height="13" viewBox="0 0 13 13" fill="none" stroke="#666"><path d="M5 2.500h7.500v10H1.500V6M3 6.500h8M3 8.500h8M3 10.500h8" /><path d="M5.500 5v7M8.500 5v7" stroke="#f3f3f3" /><circle cx="3" cy="3" r="3" fill="#666" stroke="none" /><path d="M7 2h5v2H7z" fill="#666" stroke="none" /></svg>
      <T w={60} className="ml-[22px] pb-px">Page: 1 of 1</T>
      <svg className="ml-[976px]" width="13" height="13" viewBox="0 0 13 13" fill="none" stroke="#666" shapeRendering="crispEdges"><path d="M.5 .5h12v12H.5zM.5 4.500h12M.5 8.500h12M4.500 .5v12M8.500 .5v12" /></svg>
      <div className="ml-[14px] flex h-[21px] w-[40px] items-center justify-center bg-[#c6c6c6]">
        <svg width="14" height="13" viewBox="0 0 14 13" fill="none" stroke="#555" shapeRendering="crispEdges"><path d="M.5 .5h13v12H.5zM3.500 2.500h7v8h-7zM5 4.500h4M5 6.500h4M5 8.500h4" /></svg>
      </div>
      <svg className="ml-[13px]" width="14" height="13" viewBox="0 0 14 13" fill="none" stroke="#666" shapeRendering="crispEdges"><path d="M.5 .5h13v12H.5zM4.500 .5v7M9.500 .5v7M0 7.500h10" /></svg>
      <div className="ml-[19px] h-px w-[8px] bg-[#444]" />
      <div className="ml-[5px] flex h-[21px] w-[100px] items-center justify-center">
        <div className="h-px w-[48px] bg-[#ababab]" /><div className="h-[11px] w-[5px] bg-[#555]" /><div className="h-px w-[47px] bg-[#ababab]" />
      </div>
      <svg className="ml-[5px]" width="9" height="9" viewBox="0 0 9 9" stroke="#444" shapeRendering="crispEdges"><path d="M0 4.500h9M4.500 0v9" /></svg>
      <T w={27} className="ml-[12px] pb-px">100%</T>
    </div>
  );
}

/* ---------- task bar ---------- */

function OfficeIcon({ a, b, c, d, letter }: { a: string; b: string; c: string; d: string; letter: string }) {
  return (
    <svg width="24" height="22" viewBox="0 0 24 22">
      <path d="M7 0h17v22H6V1z" fill={a} /><path d="M6 5.500h18V11H6z" fill={b} /><path d="M6 11h18v5.500H6z" fill={c} /><path d="M6 16.500h18V22H6z" fill={d} />
      <path d="M0 5h12v12H0z" fill={c} />
      <text x="6" y="15" fontSize="11" fontWeight="bold" textAnchor="middle" fill="#fff">{letter}</text>
    </svg>
  );
}

function TaskBar() {
  const slot = "flex h-[40px] w-[49px] shrink-0 items-center justify-center";
  return (
    <footer className="flex h-[40px] shrink-0 items-center bg-linear-to-r from-[#27321f] via-[#26301f] to-[#383b28] text-[12px] leading-none text-white">
      <div className="flex w-[48px] justify-center">
        <svg width="16" height="16" viewBox="0 0 16 16" fill="#fff"><path d="M0 2.200L6.700 1.200v6.300H0zM7.500 1.100L16 0v7.500H7.500zM0 8.300h6.700v6.500L0 13.800zM7.500 8.300H16V16l-8.500-1.100z" /></svg>
      </div>
      <div className="flex w-[50px] justify-center pr-[2px]">
        <svg width="17" height="17" viewBox="0 0 17 17" fill="none" stroke="#fff" strokeWidth="1.400"><circle cx="10.500" cy="6.300" r="5.500" /><path d="M6.500 10.300L.5 16.300" /></svg>
      </div>
      <div className={slot}>
        <svg width="22" height="19" viewBox="0 0 22 19"><path d="M0 1h8l2 2h12v15H0z" fill="#e8a810" /><path d="M0 5h22v13H0z" fill="#fcd464" /><path d="M4 10h14v9h-4v-4H8v4H4z" fill="#3c9be0" /></svg>
      </div>
      <div className={slot}>
        <svg width="24" height="24" viewBox="0 0 24 24"><circle cx="12" cy="12" r="12" fill="#fbc116" /><path d="M12 12L1.600 6A12 12 0 0 1 22.400 6H12z" fill="#e33b2e" /><path d="M12 12l5.200 3L12 24A12 12 0 0 1 1.600 6L6.800 15z" fill="#2da94f" /><circle cx="12" cy="12" r="6" fill="#fff" /><circle cx="12" cy="12" r="4.700" fill="#3b7ded" /></svg>
      </div>
      <div className={slot}>
        <svg width="23" height="24" viewBox="0 0 23 24">
          <defs><linearGradient id="ff" x1=".8" y1="0" x2=".3" y2="1"><stop offset="0" stopColor="#fff04a" /><stop offset=".5" stopColor="#ff8a26" /><stop offset="1" stopColor="#f5245f" /></linearGradient></defs>
          <path d="M16 0c2 3 7 6 7 13a11.300 11 0 0 1-23 0C0 9 2 6 3 3l2 3 3-1c0-2 1-3 2-3 1 2 3 3 5 4z" fill="url(#ff)" /><circle cx="11.500" cy="12.500" r="5.500" fill="#7a3fdc" /><path d="M4 9c4-2 7-1 9 1-2 0-2 1-3 2 0 3 5 3 7 0 1 6-3 8-7 8-5 0-8-5-6-11z" fill="#ff7a2a" />
        </svg>
      </div>
      <div className={slot}>
        <svg width="18" height="24" viewBox="0 0 18 24"><path d="M0 0h18v24H0z" fill="#707a84" /><path d="M2 2h14v4H2z" fill="#47cdf5" /><path d="M2 8h4v4H2zM7 8h4v4H7zM12 8h4v4h-4zM2 13h4v4H2zM7 13h4v4H7zM2 18h4v4H2zM7 18h4v4H7z" fill="#d5dade" /><path d="M12 13h4v9h-4z" fill="#0f4f8f" /></svg>
      </div>
      <div className={slot}>
        <svg width="24" height="22" viewBox="0 0 24 22"><circle cx="13" cy="11" r="11" fill="#ed6c47" /><path d="M13 0a11 11 0 0 1 11 11H13z" fill="#ff8f6b" /><path d="M2 11h22a11 11 0 0 1-22 0z" fill="#d35230" /><path d="M0 5h12v12H0z" fill="#c43e1c" /><text x="6" y="15" fontSize="11" fontWeight="bold" textAnchor="middle" fill="#fff">P</text></svg>
      </div>
      <div className="ml-[1px] flex h-[40px] w-[48px] shrink-0 items-center justify-center border-b-2 border-[#76cf97] bg-[#52594a] pt-[2px]">
        <OfficeIcon a="#2fc481" b="#21a366" c="#107c41" d="#185c37" letter="X" />
      </div>
      <div className={slot}><OfficeIcon a="#41a5ee" b="#2b7cd3" c="#185abd" d="#103f91" letter="W" /></div>
      <svg className="ml-[706px]" width="12" height="7" viewBox="0 0 12 7" fill="none" stroke="#fff" strokeWidth="1.300"><path d="M.5 6.500L6 1l5.500 5.500" /></svg>
      <svg className="ml-[9px]" width="17" height="14" viewBox="0 0 17 14" fill="none" stroke="#fff" strokeWidth="1.100"><path d="M.6 4.500h2.500L6.500 1v12L3.100 9.500H.6zM8.500 4.500q2 2.500 0 5M10.800 3q3 4 0 8" /><path d="M13.300 1q4.500 6 0 12" stroke="#888" /></svg>
      <svg className="ml-[8px]" width="16" height="15" viewBox="0 0 16 15" fill="none" stroke="#fff" shapeRendering="crispEdges"><path d="M5 2.500h10.500v8h-11V7M7 13.500h6M10.500 11v3M.5 1.500h4v4h-4zM2.500 5.500v8h3M2 3.500h1" /></svg>
      <T w={23} className="ml-[10px]">ENG</T>
      <div className="ml-[12px] flex w-[54px] flex-col items-center gap-[6px]"><T w={50}>07:56 AM</T><T w={52}>10/6/2025</T></div>
      <svg className="ml-[16px] mt-[4px]" width="25" height="26" viewBox="0 0 25 26"><path d="M1 0h16v13H9l-4 4v-4H1z" fill="#fff" /><path d="M4 4h10M4 7h10M4 10h7" stroke="#363a27" /><circle cx="16" cy="16" r="8" fill="#383b33" stroke="#999" /><text x="16" y="20.500" fontSize="12" textAnchor="middle" fill="#fff">1</text></svg>
      <div className="ml-[11px] h-[40px] w-px bg-[#777a6c]" />
    </footer>
  );
}

function Tooltip() {
  return (
    <div className="absolute left-[658px] top-[157px] flex h-[166px] w-[238px] flex-col border border-[#bebebe] bg-white text-[12px] leading-[15px] text-[#666] shadow-[2px_2px_3px_rgba(0,0,0,0.2)]">
      <div className="ml-[11px] mt-[6px]"><T w={89} className="text-[11.5px] font-bold">Number Format</T></div>
      <div className="ml-[11px] mt-[10px] flex flex-col"><T w={202} className="self-start">Choose the format for your cells, such</T><T w={198} className="self-start">as percentage, currency, date or time.</T></div>
      <div className="mx-[11px] mt-[6px] h-px bg-[#dcdcdc]" />
      <div className="mt-[8px] flex text-[#2b639f]">
        <svg className="ml-[12px]" width="11" height="15" viewBox="0 0 11 15"><path d="M2.500 7V4c0-4 6-4 6 0v3" fill="none" stroke="#e8c088" strokeWidth="1.500" /><path d="M0 6h11v8H0z" fill="#e8bd7c" /><path d="M5 8h1.500v4H5z" fill="#fff" /></svg>
        <T w={196} className="ml-[11px] text-[11.5px] font-bold">This command is currently disabled.</T>
      </div>
      <div className="ml-[33px] mt-[7px] flex flex-col items-start text-[#2b639f]">
        <T w={197}>To enable it purchase a licensed copy</T>
        <T w={103}>of Microsoft Office.</T>
        <T w={70} className="mt-[15px]">Tell me more</T>
      </div>
    </div>
  );
}

export default function App() {
  return (
    <div className={`relative flex h-[768px] w-[1366px] flex-col overflow-hidden bg-[#e6e6e6] ${UI}`}>
      <TitleBar />
      <TabBar />
      <Ribbon />
      <FormulaBar />
      <Sheet />
      <SheetTabs />
      <StatusBar />
      <TaskBar />
      <Tooltip />
      <svg className="pointer-events-none absolute left-0 top-0" width="1366" height="768" viewBox="0 0 1366 768" fill="none" stroke="#ed1c24" strokeWidth="5.500" shapeRendering="crispEdges">
        <ellipse cx="683" cy="112" rx="677.500" ry="95.500" />
        <ellipse cx="773" cy="273" rx="153.500" ry="66" />
      </svg>
    </div>
  );
}
